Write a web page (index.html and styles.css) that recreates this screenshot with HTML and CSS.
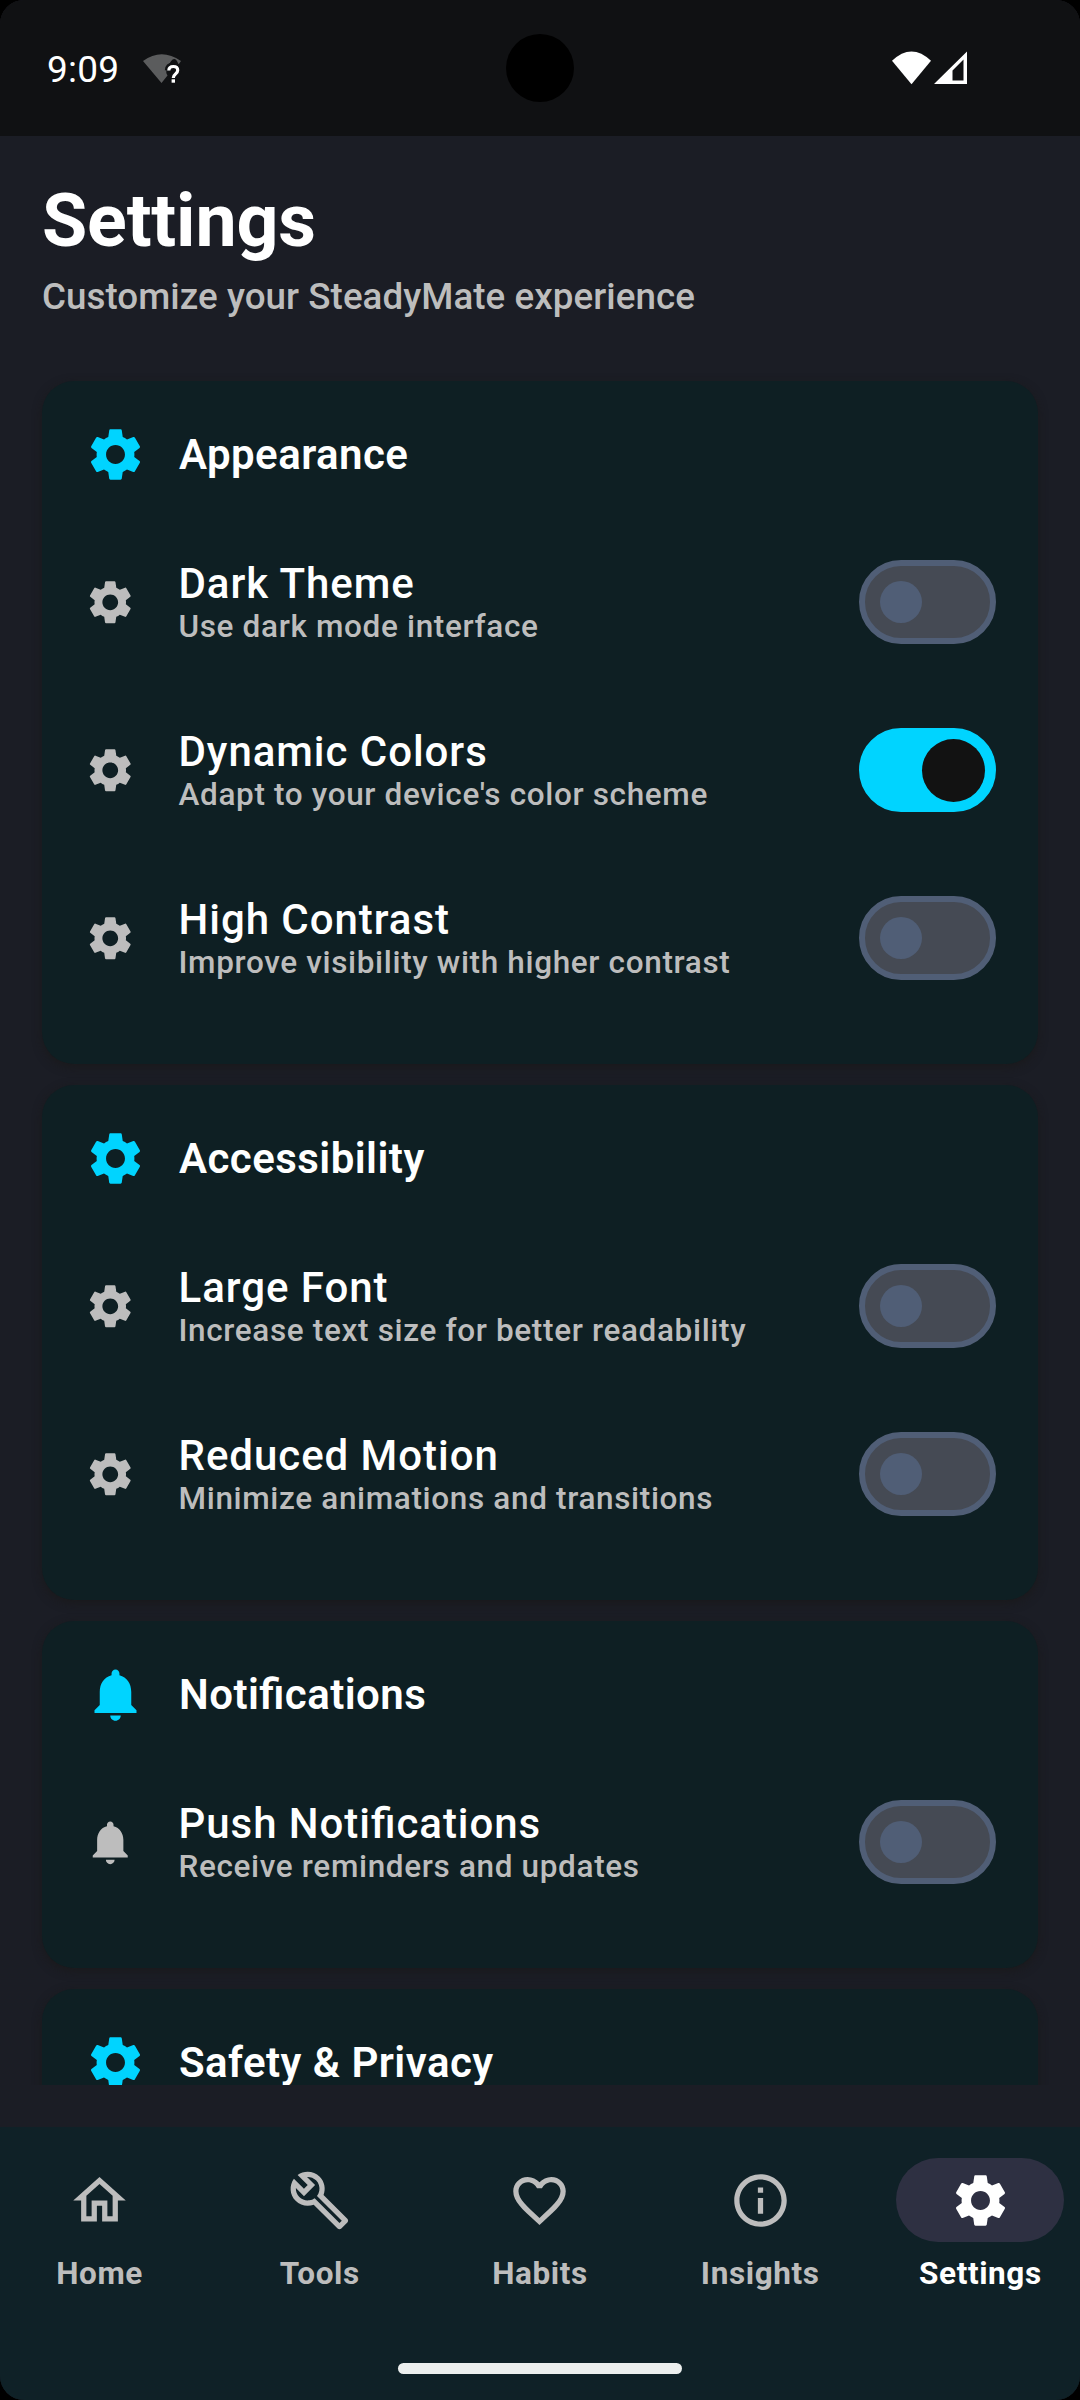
FILE: index.html
```html
<!DOCTYPE html>
<html lang="en">
<head>
<meta charset="utf-8">
<title>Settings</title>
<link rel="stylesheet" href="styles.css">
</head>
<body>
<svg class="sprite" aria-hidden="true">
  <symbol id="gear" viewBox="0 0 24 24"><path d="M19.14 12.94c.04-.3.06-.61.06-.94 0-.32-.02-.64-.07-.94l2.03-1.58c.18-.14.23-.41.12-.61l-1.92-3.32c-.12-.22-.37-.29-.59-.22l-2.39.96c-.5-.38-1.03-.7-1.62-.94l-.36-2.54c-.04-.24-.24-.41-.48-.41h-3.84c-.24 0-.43.17-.47.41l-.36 2.54c-.59.24-1.13.57-1.62.94l-2.39-.96c-.22-.08-.47 0-.59.22L2.74 8.87c-.12.21-.08.47.12.61l2.03 1.58c-.05.3-.09.63-.09.94s.02.64.07.94l-2.03 1.58c-.18.14-.23.41-.12.61l1.92 3.32c.12.22.37.29.59.22l2.39-.96c.5.38 1.03.7 1.62.94l.36 2.54c.05.24.24.41.48.41h3.84c.24 0 .44-.17.47-.41l.36-2.54c.59-.24 1.13-.56 1.62-.94l2.39.96c.22.08.47 0 .59-.22l1.92-3.32c.12-.22.07-.47-.12-.61l-2.01-1.58zM12 15.6c-1.98 0-3.6-1.62-3.6-3.6s1.62-3.6 3.6-3.6 3.6 1.62 3.6 3.6-1.62 3.6-3.6 3.6z"/></symbol>
  <symbol id="bell" viewBox="0 0 24 24"><path d="M12 22c1.1 0 2-.9 2-2h-4c0 1.1.89 2 2 2zm6-6v-5c0-3.07-1.64-5.64-4.5-6.32V4c0-.83-.67-1.5-1.5-1.5s-1.5.67-1.5 1.5v.68C7.63 5.36 6 7.92 6 11v5l-2 2v1h16v-1l-2-2z"/></symbol>
</svg>
<div class="screen">
  <header class="status">
    <span class="clock">9:09</span>
    <svg class="wifi-weak" viewBox="0 0 40 32"><path class="dim" d="M1 8Q19.500-5.500 39 8L36.500 11.500Q32-1 25.500 15Q23 19 25.500 22.500L19.500 30Z"/><path class="gap" d="M26.800 17.500Q27 13.500 31.300 13.500Q35.700 13.500 35.700 17.300Q35.700 19.500 33.300 21.200Q31.300 22.700 31.300 25.500V29.500"/><path class="mark" d="M26.800 17.500Q27 13.500 31.300 13.500Q35.700 13.500 35.700 17.300Q35.700 19.500 33.300 21.200Q31.300 22.700 31.300 25"/><rect class="mark-dot" x="29.600" y="26.300" width="3.400" height="3.400"/></svg>
    <span class="camera"></span>
    <svg class="signals" viewBox="0 0 76 34"><path d="M0 9.800Q19.500-8.800 39 9.800L19.500 33.300Z"/><path fill-rule="evenodd" d="M75 .5V33H42ZM71.500 8.500L60.500 19.500V29.500H71.500Z"/></svg>
  </header>
  <main class="page">
    <h1 class="title">Settings</h1>
    <p class="subtitle">Customize your SteadyMate experience</p>
    <section class="card">
      <h2 class="card-head"><svg class="icon"><use href="#gear"/></svg>Appearance</h2>
      <div class="row"><svg class="icon"><use href="#gear"/></svg><div class="copy"><div class="name">Dark Theme</div><div class="hint">Use dark mode interface</div></div><span class="switch"></span></div>
      <div class="row"><svg class="icon"><use href="#gear"/></svg><div class="copy"><div class="name">Dynamic Colors</div><div class="hint">Adapt to your device's color scheme</div></div><span class="switch on"></span></div>
      <div class="row"><svg class="icon"><use href="#gear"/></svg><div class="copy"><div class="name">High Contrast</div><div class="hint">Improve visibility with higher contrast</div></div><span class="switch"></span></div>
    </section>
    <section class="card">
      <h2 class="card-head"><svg class="icon"><use href="#gear"/></svg>Accessibility</h2>
      <div class="row"><svg class="icon"><use href="#gear"/></svg><div class="copy"><div class="name">Large Font</div><div class="hint">Increase text size for better readability</div></div><span class="switch"></span></div>
      <div class="row"><svg class="icon"><use href="#gear"/></svg><div class="copy"><div class="name">Reduced Motion</div><div class="hint">Minimize animations and transitions</div></div><span class="switch"></span></div>
    </section>
    <section class="card">
      <h2 class="card-head"><svg class="icon"><use href="#bell"/></svg>Notifications</h2>
      <div class="row"><svg class="icon"><use href="#bell"/></svg><div class="copy"><div class="name">Push Notifications</div><div class="hint">Receive reminders and updates</div></div><span class="switch"></span></div>
    </section>
    <section class="card">
      <h2 class="card-head"><svg class="icon"><use href="#gear"/></svg>Safety &amp; Privacy</h2>
    </section>
  </main>
  <footer class="bottom">
    <nav class="nav">
      <a class="tab"><span class="pill"><svg class="icon" viewBox="0 0 24 24"><path d="M12 5.690l5 4.500V18h-2v-6H9v6H7v-7.810l5-4.500M12 3L2 12h3v8h6v-6h2v6h6v-8h3L12 3z"/></svg></span>Home</a>
      <a class="tab"><span class="pill"><svg class="icon" viewBox="0 0 24 24"><path d="M22.610 18.990l-9.080-9.080c.93-2.340.45-5.100-1.440-7C9.790.61 6.210.4 3.660 2.260L7.500 6.110 6.080 7.520 2.250 3.690C.39 6.230.6 9.820 2.900 12.110c1.860 1.860 4.570 2.350 6.890 1.480l9.110 9.110c.39.39 1.020.39 1.410 0l2.300-2.300c.4-.38.4-1.010 0-1.410zm-3 1.600l-9.460-9.460c-.61.45-1.290.72-2 .82-1.360.2-2.790-.21-3.830-1.250C3.370 9.760 2.930 8.500 3 7.260l3.090 3.090 4.240-4.240-3.090-3.090c1.240-.07 2.490.37 3.440 1.310 1.080 1.080 1.490 2.570 1.240 3.960-.12.71-.42 1.370-.88 1.960l9.450 9.450-.88.89z"/></svg></span>Tools</a>
      <a class="tab"><span class="pill"><svg class="icon" viewBox="0 0 24 24"><path d="M16.500 3c-1.740 0-3.410.81-4.500 2.090C10.910 3.810 9.240 3 7.500 3 4.420 3 2 5.420 2 8.500c0 3.780 3.400 6.860 8.550 11.540L12 21.350l1.450-1.320C18.600 15.360 22 12.280 22 8.500 22 5.420 19.580 3 16.500 3zm-4.400 15.550l-.1.100-.1-.1C7.140 14.240 4 11.390 4 8.500 4 6.500 5.500 5 7.500 5c1.540 0 3.040.99 3.570 2.360h1.870C13.460 5.990 14.960 5 16.500 5c2 0 3.500 1.500 3.500 3.500 0 2.890-3.140 5.740-7.900 10.050z"/></svg></span>Habits</a>
      <a class="tab"><span class="pill"><svg class="icon" viewBox="0 0 24 24"><path d="M11 7h2v2h-2zm0 4h2v6h-2zm1-9C6.480 2 2 6.480 2 12s4.480 10 10 10 10-4.480 10-10S17.520 2 12 2zm0 18c-4.410 0-8-3.590-8-8s3.590-8 8-8 8 3.590 8 8-3.590 8-8 8z"/></svg></span>Insights</a>
      <a class="tab active"><span class="pill"><svg class="icon"><use href="#gear"/></svg></span>Settings</a>
    </nav>
    <div class="handle"></div>
  </footer>
</div>
</body>
</html>
```
FILE: styles.css
```css
* { box-sizing: border-box; }
body { margin: 0; background: #000; font-family: Roboto, sans-serif; font-feature-settings: "liga" 1; color: #fff; }
h1, h2, p { margin: 0; }
.sprite { display: none; }
.icon { flex: none; width: 63px; height: 63px; fill: currentColor; }

.screen { display: flex; flex-direction: column; width: 1080px; height: 2400px; overflow: hidden; border-radius: 24px; background: #1b1d25; }

.status { position: relative; flex: none; display: flex; align-items: center; height: 136px; padding: 0 112px 0 47px; background: #101113; }
.clock { width: 71px; margin-top: 3px; font-size: 37px; line-height: 43px; letter-spacing: .2px; white-space: nowrap; }
.wifi-weak { width: 40px; height: 32px; margin: 2px 0 0 24px; }
.wifi-weak .dim { fill: #5b5c5d; }
.wifi-weak .gap { fill: none; stroke: #101113; stroke-width: 8; }
.mark { fill: none; stroke: #fff; stroke-width: 3.2; }
.mark-dot { fill: #fff; }
.camera { position: absolute; left: 506px; top: 34px; width: 68px; height: 68px; border-radius: 50%; background: #000; }
.signals { width: 76px; height: 34px; margin-left: auto; fill: #fff; }

.page { flex: none; height: 1949px; padding: 42px 42px 0; overflow: hidden; }
.title { font-size: 73.5px; line-height: 86px; font-weight: 700; letter-spacing: -.15px; }
.subtitle { margin: 11px 0 63px; font-size: 36.75px; line-height: 43px; font-weight: 500; letter-spacing: .05px; color: #bdbdbd; }

.card { padding: 42px; margin-bottom: 21px; border-radius: 32px; background: #0e1f23; box-shadow: 0 3px 10px rgba(25, 24, 24, .75); }
.card-head { display: flex; align-items: center; gap: 32px; height: 63px; margin-bottom: 32px; font-size: 42px; line-height: 49px; font-weight: 600; letter-spacing: .45px; }
.card-head .icon { color: #00d4ff; }
.row { display: flex; align-items: center; gap: 42px; height: 168px; }
.row .icon { width: 52.5px; height: 52.5px; color: #bdbdbd; }
.copy { flex: 1; }
.name { font-size: 42px; line-height: 49px; font-weight: 500; letter-spacing: .95px; }
.hint { font-size: 31.5px; line-height: 37px; font-weight: 500; letter-spacing: .65px; color: #bdbdbd; }

.switch { display: flex; align-items: center; flex: none; width: 137px; height: 84px; padding-left: 15px; border: 6px solid #505e76; border-radius: 42px; background: #454a54; }
.switch::before { content: ""; width: 42px; height: 42px; border-radius: 50%; background: #505e76; }
.switch.on { padding-left: 57px; border-color: #00d4ff; background: #00d4ff; }
.switch.on::before { width: 63px; height: 63px; background: #121212; }

.bottom { flex: 1; display: flex; flex-direction: column; align-items: center; margin-top: 42px; padding: 31px 0 26px; background: #0f2127; }
.nav { display: grid; grid-template-columns: repeat(5, 1fr); gap: 21px; width: 100%; }
.tab { display: flex; flex-direction: column; align-items: center; gap: 13px; font-size: 31.5px; line-height: 37px; font-weight: 700; letter-spacing: .6px; color: #bdbdbd; }
.pill { display: flex; align-items: center; justify-content: center; width: 168px; height: 84px; border-radius: 42px; }
.active { color: #fff; }
.active .pill { background: #2e3042; }
.handle { width: 284px; height: 11px; margin-top: auto; border-radius: 6px; background: #ecefee; }
```
